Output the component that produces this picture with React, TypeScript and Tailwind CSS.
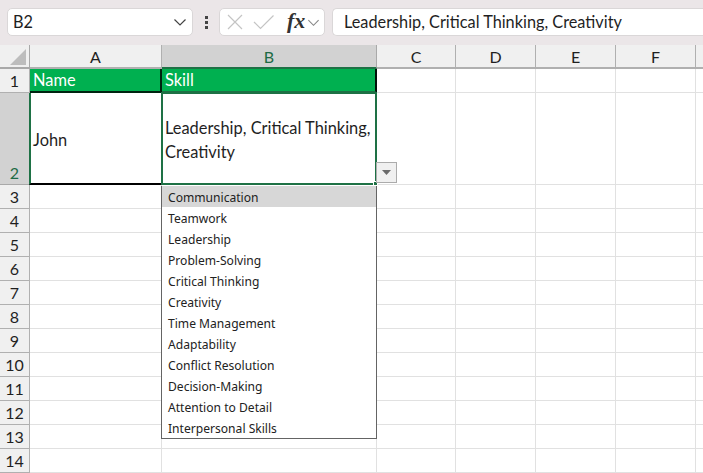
import React from "react";

const cols = ["A", "B", "C", "D", "E", "F"];
const items = [
  "Communication",
  "Teamwork",
  "Leadership",
  "Problem-Solving",
  "Critical Thinking",
  "Creativity",
  "Time Management",
  "Adaptability",
  "Conflict Resolution",
  "Decision-Making",
  "Attention to Detail",
  "Interpersonal Skills",
];
const rows = [3, 4, 5, 6, 7, 8, 9, 10, 11, 12, 13, 14];
const line = "border-r border-b border-[#e1e1e1]";
const head = "font-['Lato','Noto_Sans',sans-serif] text-[16px]";

function Chevron({ size = 14, color = "#444" }: { size?: number; color?: string }) {
  return (
    <svg width={size} height={size} viewBox="0 0 14 14" fill="none">
      <path d="M1.5 4.5 L7 10 L12.5 4.5" stroke={color} strokeWidth="1.2" />
    </svg>
  );
}

export default function App() {
  return (
    <div className="relative w-[703px] h-[473px] overflow-hidden bg-white text-[#1f1f1f] font-['Lato',sans-serif]">
      <div className="h-[45px] bg-[#ebe6e8] flex items-start pt-[8px] pl-[7px]">
        <div className="w-[186px] h-[28px] bg-white rounded-[5px] border border-[#dad7d8] flex items-center justify-between pl-[5px] pr-[5px] text-[16.3px]">
          <span>B2</span>
          <Chevron />
        </div>
        <div className="w-[26px] h-[28px] flex flex-col items-center justify-center gap-[2px]">
          <span className="w-[3px] h-[3px] bg-[#444]" />
          <span className="w-[3px] h-[3px] bg-[#444]" />
          <span className="w-[3px] h-[3px] bg-[#444]" />
        </div>
        <div className="w-[106px] h-[28px] bg-white rounded-[5px] border border-[#dad7d8] flex items-center pl-[6px] pr-[2px]">
          <svg width="18" height="18" viewBox="0 0 18 18" fill="none" className="shrink-0">
            <path d="M2 2 L16 16 M16 2 L2 16" stroke="#c4c4c4" strokeWidth="1.2" />
          </svg>
          <svg width="22" height="18" viewBox="0 0 22 18" fill="none" className="ml-[9px] shrink-0">
            <path d="M1 9 L7.5 15.5 L20.5 2.5" stroke="#c4c4c4" strokeWidth="1.2" />
          </svg>
          <span className="ml-[12px] font-['Liberation_Serif',serif] italic font-bold text-[22px] leading-none text-[#333] -mt-[3px]">fx</span>
          <span className="ml-[2px] -mr-[2px]">
            <Chevron size={13} color="#888" />
          </span>
        </div>
        <div className="ml-[7px] flex-1 h-[28px] bg-white border border-[#dad7d8] border-r-0 rounded-l-[5px] flex items-center pl-[11px] text-[16.3px] whitespace-nowrap">
          Leadership, Critical Thinking, Creativity
        </div>
      </div>

      <div className="grid grid-cols-[30px_132px_215px_79px_80px_80px_80px_7px] grid-rows-[24px_24px_92px_repeat(12,24px)] text-[16.4px]">
        <div className="bg-[#f0f0f0] border-r border-b-2 border-[#a9a9a9] flex items-end justify-end pr-[3px] pb-[2px]">
          <svg width="16" height="16" viewBox="0 0 16 16">
            <path d="M16 0 V16 H0 Z" fill="#bdbdbd" />
          </svg>
        </div>
        {cols.map((c) => (
          <div
            key={c}
            className={
              c === "B"
                ? `bg-[#d2d2d2] border-r border-b-2 border-b-[#1e7145] border-r-[#a9a9a9] text-[#1e6b45] flex items-center justify-center pt-[2px] ${head}`
                : `bg-[#f0f0f0] border-r border-b-2 border-[#b0b0b0] flex items-center justify-center pt-[2px] ${head}`
            }
          >
            {c}
          </div>
        ))}
        <div className="bg-[#f0f0f0] border-b-2 border-[#b0b0b0]" />

        <div className={`bg-[#f0f0f0] border-r border-b border-[#b0b0b0] flex items-center justify-center pt-[1px] ${head}`}>1</div>
        <div className="bg-[#00b050] text-white border-r-2 border-b-2 border-r-black/80 border-b-black/80 flex items-center pl-[3px]">Name</div>
        <div className="bg-[#00b050] text-white border-r-2 border-b-2 border-r-black/90 border-b-[#1e7145] flex items-center pl-[3px]">Skill</div>
        {[0, 1, 2, 3, 4].map((i) => (
          <div key={i} className={i === 4 ? "border-b border-[#e1e1e1]" : line} />
        ))}

        <div className={`bg-[#d2d2d2] border-r border-b border-[#a9a9a9] text-[#1e6b45] flex items-end justify-center ${head}`}>
          <span className="translate-y-[1px]">2</span>
        </div>
        <div className="border-l-2 border-b-2 border-l-[#1e7145] border-b-black flex items-center pl-[2px] pt-[4px] -ml-[1px]">
          John
        </div>
        <div className="border-2 border-[#1e7145] flex items-center pl-[2px] pt-[2px] -mt-[1px] -ml-[1px] leading-[24px] relative">
          <span className="block whitespace-nowrap">
            Leadership, Critical Thinking,
            <br />
            Creativity
          </span>
          <span className="absolute -right-[3px] -bottom-[3px] w-[5px] h-[5px] bg-[#1e7145] border border-white" />
        </div>
        {[0, 1, 2, 3, 4].map((i) => (
          <div key={i} className={i === 4 ? "border-b border-[#e1e1e1]" : line} />
        ))}

        {rows.map((r) => (
          <React.Fragment key={r}>
            <div className={`bg-[#f0f0f0] border-r border-b border-[#b0b0b0] flex items-center justify-center pt-[1px] ${head}`}>{r}</div>
            <div className={line} />
            <div className={line} />
            <div className={line} />
            <div className={line} />
            <div className={line} />
            <div className={line} />
            <div className="border-b border-[#e1e1e1]" />
          </React.Fragment>
        ))}
      </div>

      <div className="absolute left-[376px] top-[162px] w-[21px] h-[21px] bg-[#f0f0f0] border border-[#ababab] flex items-center justify-center">
        <svg width="9" height="5" viewBox="0 0 9 5">
          <path d="M0 0 H9 L4.5 5 Z" fill="#6a6a6a" />
        </svg>
      </div>

      <div className="absolute left-[161px] top-[186px] w-[216px] h-[253px] bg-white border border-[#646464] border-t-0 font-['Noto_Sans',sans-serif] text-[12.1px] text-[#222]">
        {items.map((t, i) => (
          <div
            key={t}
            className={`h-[21px] flex items-center pl-[6px] pt-[3px] ${i === 0 ? "bg-[#d7d7d7]" : ""}`}
          >
            {t}
          </div>
        ))}
      </div>
    </div>
  );
}
